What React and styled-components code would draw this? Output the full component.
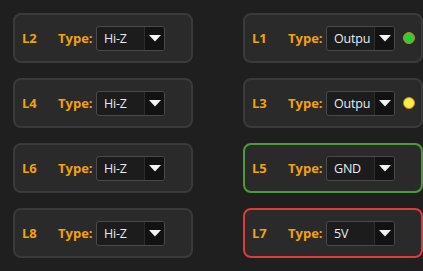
import React from "react";
import styled, { createGlobalStyle } from "styled-components";

const Global = createGlobalStyle`
  html, body { margin: 0; padding: 0; background: #1f1f1f; }
  body { font-family: "Open Sans", "Noto Sans", "Liberation Sans", sans-serif; }
`;

const Grid = styled.div`
  display: grid;
  grid-template-columns: 180px 180px;
  column-gap: 50px;
  row-gap: 15px;
  padding: 13px 0 0 13px;
`;

const Card = styled.div`
  box-sizing: border-box;
  height: 50px;
  border: 2px solid ${(p) => p.$border || "#3a3a3a"};
  border-radius: 8px;
  background: #2a2a2a;
  display: flex;
  align-items: center;
  padding: 0 0 0 7px;
`;

const Pin = styled.span`
  width: 36px;
  flex-shrink: 0;
  color: #f2a20c;
  font-weight: 700;
  font-size: 13px;
`;

const TypeLabel = styled.span`
  color: #f2a20c;
  font-weight: 700;
  font-size: 13px;
  width: 38px;
  flex-shrink: 0;
`;

const Select = styled.div`
  box-sizing: border-box;
  width: 69px;
  height: 25px;
  flex-shrink: 0;
  border: 1px solid #4a4a4a;
  border-radius: 3px;
  background: #1c1c1c;
  display: flex;
  align-items: stretch;
  overflow: hidden;
`;

const Value = styled.span`
  flex: 1;
  min-width: 0;
  display: flex;
  align-items: center;
  padding-left: 7px;
  color: #e4ecf4;
  font-size: 12.5px;
  letter-spacing: -0.2px;
  overflow: hidden;
  white-space: nowrap;
`;

const Arrow = styled.span`
  width: 19px;
  flex-shrink: 0;
  background: #121212;
  border-left: 1px solid #2c2c2c;
  display: flex;
  align-items: center;
  justify-content: center;
`;

const Dot = styled.span`
  width: 12px;
  height: 12px;
  flex-shrink: 0;
  box-sizing: border-box;
  border-radius: 50%;
  background: ${(p) => p.$color};
  border: 1px solid #d08a10;
  margin-left: 8px;
`;

const Tri = () => (
  <svg width="12" height="7" viewBox="0 0 12 7">
    <path d="M0 0 H12 L6 6.5 Z" fill="#f4f4f4" />
  </svg>
);

const rows = [
  { l: "L2", v: "Hi-Z" },
  { l: "L1", v: "Outpu", dot: "#2ecc3a" },
  { l: "L4", v: "Hi-Z" },
  { l: "L3", v: "Outpu", dot: "#ffee4a" },
  { l: "L6", v: "Hi-Z" },
  { l: "L5", v: "GND", border: "#4c9a3a" },
  { l: "L8", v: "Hi-Z" },
  { l: "L7", v: "5V", border: "#e03a3a" },
];

export default function App() {
  return (
    <>
      <Global />
      <Grid>
        {rows.map((r) => (
          <Card key={r.l} $border={r.border}>
            <Pin>{r.l}</Pin>
            <TypeLabel>Type:</TypeLabel>
            <Select>
              <Value>{r.v}</Value>
              <Arrow>
                <Tri />
              </Arrow>
            </Select>
            {r.dot && <Dot $color={r.dot} />}
          </Card>
        ))}
      </Grid>
    </>
  );
}
